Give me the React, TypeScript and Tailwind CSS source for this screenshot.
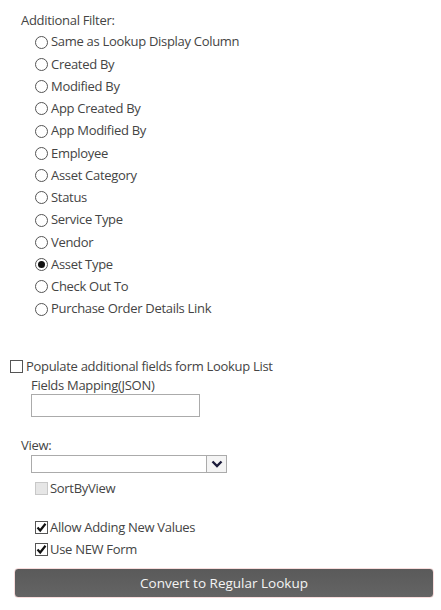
import { useState } from "react";

const filterOptions = [
  "Same as Lookup Display Column",
  "Created By",
  "Modified By",
  "App Created By",
  "App Modified By",
  "Employee",
  "Asset Category",
  "Status",
  "Service Type",
  "Vendor",
  "Asset Type",
  "Check Out To",
  "Purchase Order Details Link",
];

function Radio({ checked }: { checked: boolean }) {
  return (
    <span className="w-[13px] h-[13px] rounded-full border border-[#555] bg-white flex items-center justify-center shrink-0">
      {checked && <span className="w-[7px] h-[7px] rounded-full bg-[#111]" />}
    </span>
  );
}

function CheckBox({ checked, disabled }: { checked?: boolean; disabled?: boolean }) {
  return (
    <span
      className={
        disabled
          ? "w-[13px] h-[13px] border border-[#c8c8c8] bg-[#e6e6e6] shrink-0"
          : "w-[13px] h-[13px] border border-[#555] bg-white shrink-0 flex items-center justify-center"
      }
    >
      {checked && (
        <svg width="11" height="11" viewBox="0 0 11 11">
          <path d="M1.5 5.5 L4.2 8.5 L9.5 1.8" fill="none" stroke="#111" strokeWidth="2.2" />
        </svg>
      )}
    </span>
  );
}

export default function App() {
  const [selected, setSelected] = useState("Asset Type");
  return (
    <div
      className="w-[441px] h-[610px] bg-white text-[13px] tracking-[-0.3px] text-[#444] pt-[9px] overflow-hidden"
      style={{ fontFamily: '"Open Sans", "Noto Sans", sans-serif' }}
    >
      <div className="pl-[21px] h-[22px] leading-[22px]">Additional Filter:</div>
      <div className="pl-[35px] flex flex-col">
        {filterOptions.map((opt) => (
          <div
            key={opt}
            onClick={() => setSelected(opt)}
            className="h-[22.25px] flex items-center gap-[3px] cursor-default"
          >
            <Radio checked={selected === opt} />
            <span>{opt}</span>
          </div>
        ))}
      </div>

      <div className="mt-[35px] pl-[10px] h-[22px] flex items-center gap-[3px]">
        <CheckBox />
        <span>Populate additional fields form Lookup List</span>
      </div>
      <div className="pl-[31px] h-[16px] leading-[16px]">Fields Mapping(JSON)</div>
      <div className="pl-[31px] mt-[1px]">
        <div className="w-[169px] h-[23px] border border-[#ababab] bg-white" />
      </div>

      <div className="pl-[21px] mt-[19px] h-[18px] leading-[18px]">View:</div>
      <div className="pl-[31px] mt-[1px]">
        <div className="w-[196px] h-[18px] border border-[#ababab] bg-white flex justify-end">
          <div className="w-[20px] h-full border-l border-[#ababab] bg-[#f4f4f4] flex items-center justify-center">
            <svg width="12" height="8" viewBox="0 0 12 8">
              <path d="M1.5 1.5 L6 6 L10.5 1.5" fill="none" stroke="#1b1b3a" strokeWidth="2.4" />
            </svg>
          </div>
        </div>
      </div>
      <div className="pl-[35px] mt-[4px] h-[22px] flex items-center gap-[2px]">
        <CheckBox disabled />
        <span>SortByView</span>
      </div>

      <div className="pl-[35px] mt-[17px] flex flex-col">
        <div className="h-[22px] flex items-center gap-[2px]">
          <CheckBox checked />
          <span>Allow Adding New Values</span>
        </div>
        <div className="h-[22px] flex items-center gap-[2px]">
          <CheckBox checked />
          <span>Use NEW Form</span>
        </div>
      </div>

      <div className="pl-[14px] mt-[8px]">
        <button className="w-[420px] h-[30px] rounded-[4px] border border-[#f8dcdc] bg-[linear-gradient(#5a5a5a,#646464)] text-[#f4f4f4] text-[13.5px] tracking-normal flex items-center justify-center">
          Convert to Regular Lookup
        </button>
      </div>
    </div>
  );
}
